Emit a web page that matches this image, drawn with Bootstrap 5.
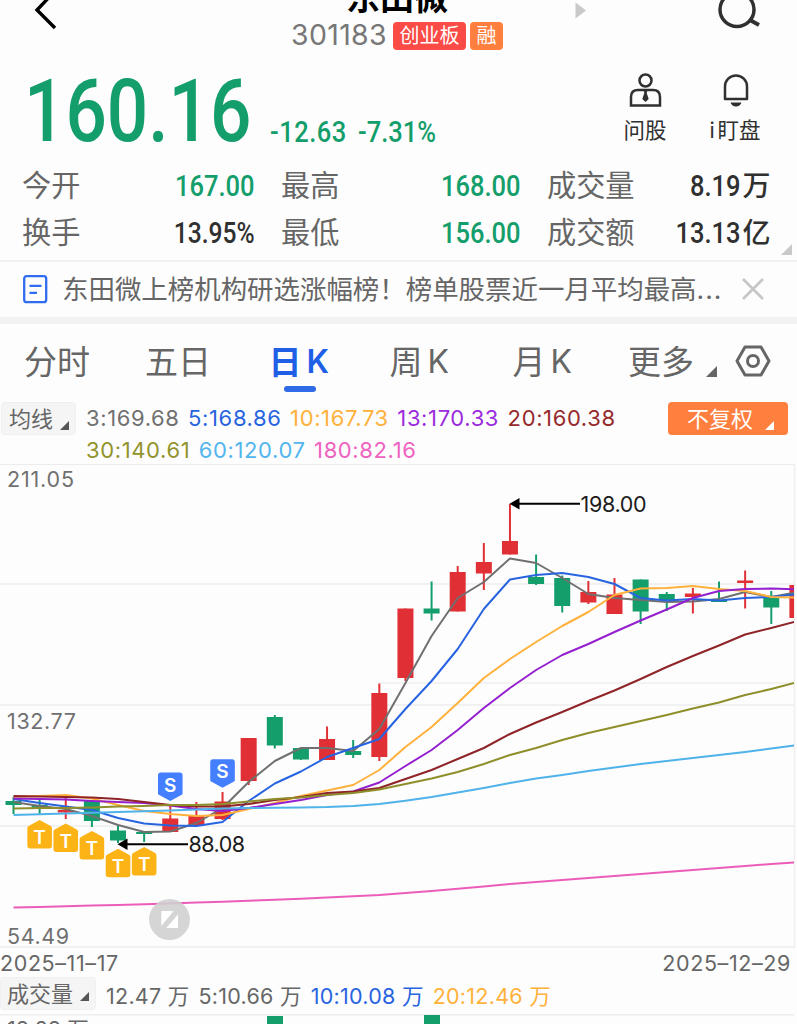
<!DOCTYPE html>
<html lang="zh-CN">
<head>
<meta charset="utf-8">
<meta name="viewport" content="width=device-width, initial-scale=1">
<title>东田微 301183</title>
<link rel="stylesheet" href="https://cdn.jsdelivr.net/npm/bootstrap@5.3.0/dist/css/bootstrap.min.css">
<style>
:root{--up:#e03035;--down:#149e6b;--ink:#303030;--soft:#666}
body{width:797px;height:1024px;overflow:hidden;background:#fdfdfd;color:var(--soft);font-family:Inter,"Noto Sans CJK SC",sans-serif;line-height:1}
svg{display:block;flex:none}
.nowrap{white-space:nowrap}
.topbar{height:60px;overflow:hidden;display:grid;grid-template-columns:260px 274px 263px}
.stock-name{font-size:34px;line-height:34px;font-weight:700;color:#000;margin-top:-19px}
.code-row{height:30px;margin-top:5.500px;gap:4px}
.code{font-size:28.500px;color:#777;font-weight:400;letter-spacing:.3px;margin-right:2px}
.tagx{height:28px;border-radius:4px;color:#fff;font-size:20px;line-height:28px}
.tag-red{background:#fa4b46;width:73px}
.tag-org{background:#ff7f3f;width:33px}
.din{display:inline-block;font-family:Roboto,sans-serif;font-weight:500;font-size:30px;line-height:32px;transform:scaleX(.85);transform-origin:right center}
.din-left{transform-origin:left center}
.din-pct{transform:scaleX(.82)}
.g{color:var(--down)} .k{color:var(--ink)}
.quote{height:102px}
.price{font-size:88px;line-height:88px;width:250px;margin-left:24px;transform:scaleX(.828)}
.quote-actions{font-size:21.500px;color:var(--ink)}
.quote-actions>div{width:90px}
.stats{display:grid;grid-template-columns:233px 240px 223.500px;column-gap:26px;grid-auto-rows:47px;padding:1px 0 0 22px;height:100px;border-bottom:2px solid #f0f0f0}
.stats>div{font-size:29.2px;height:46px}
.unit{font-size:28px;font-weight:500;color:var(--ink);margin-left:2px}
.notice{height:55px;font-size:26.45px;padding-left:22px}
.dots{letter-spacing:1px}
.band{height:7px;background:#f2f2f2}
.tabs-k{height:78px;display:grid;grid-template-columns:121px 125px 121px 123px 114px 109px 60px;padding-left:24px;font-size:33px}
.tabs-k>div{position:relative;height:76px}
.kt{left:-1.500px}
.on{color:#1e5fe6;font-weight:600}
.on::after{content:"";position:absolute;left:15px;top:62px;width:32px;height:6px;border-radius:3px;background:#2f6be6}
.lat{margin-left:5px;font-size:32px}
.legend{height:62px}
.drop{height:33px;border-radius:4px;background:#f5f5f5;border:1px solid #f0f0f0;font-size:22px}
.btn-adj{height:33px;width:120px;border-radius:4px;background:#ff7f3f;color:#fff;font-size:22px;margin-right:9px}
.ma-row{height:32px;font-size:22px;gap:8.5px;letter-spacing:.62px}
.dates{height:29px;font-size:21.5px;padding:3px 6px 0 0;letter-spacing:.6px}
.vol{height:37px;font-size:21.5px;gap:9px}
.vol-vals{height:39px;gap:9px;margin-left:1px;letter-spacing:.26px}
</style>
</head>
<body>
<header class="topbar">
  <svg width="90" height="40" viewBox="0 0 90 40"><path d="M54-8 37 10 55 28" fill="none" stroke="#000" stroke-width="3.4"/></svg>
  <div class="d-flex flex-column align-items-center">
    <div class="stock-name nowrap">东田微</div>
    <div class="code-row d-flex align-items-center nowrap">
      <span class="code">301183</span><span class="tagx tag-red text-center">创业板</span><span class="tagx tag-org text-center">融</span>
    </div>
  </div>
  <svg width="263" height="40" viewBox="0 0 263 40"><path d="M41.500 2.500 52 10.500 41.500 18.500Z" fill="#c9c9c9"/><circle cx="203" cy="9.500" r="17" fill="none" stroke="#303030" stroke-width="3.500"/><path d="m215 19.500 10 5.500" stroke="#303030" stroke-width="4"/></svg>
</header>

<section class="quote d-flex nowrap">
  <div class="din din-left g price" style="margin-top:7px">160.16</div>
  <div class="d-flex g" style="margin-top:56px;margin-left:-4px"><span class="din din-left" style="width:88px;letter-spacing:.6px">-12.63</span><span class="din din-left">-7.31%</span></div>
  <div class="quote-actions d-flex ms-auto" style="margin-right:17px">
    <div class="d-flex flex-column align-items-center">
      <svg class="mt-2" width="36" height="44" viewBox="-.5 0 36 44"><g fill="none" stroke="#303030" stroke-width="2.500"><circle cx="18" cy="12.500" r="6"/><path d="M3.500 37.500V29q0-7 7-7h15q7 0 7 7v8.500Z"/></g><path d="M16 22h4l-.8 3 2 6-3.200 3-3.200-3 2-6Z" fill="#303030"/></svg>
      <span class="mt-2">问股</span>
    </div>
    <div class="d-flex flex-column align-items-center">
      <svg class="mt-2" width="36" height="44" viewBox="-.5 0 36 44"><path d="M7.500 31V18.500a11 11 0 0 1 22 0V31Z" fill="none" stroke="#303030" stroke-width="2.500" stroke-linejoin="round"/><path d="M13 34.500h11q-1.500 4-5.500 4t-5.500-4Z" fill="#303030"/></svg>
      <span class="mt-2"><span style="margin-right:3px">i</span>盯盘</span>
    </div>
  </div>
</section>

<section class="stats position-relative nowrap">
  <div class="d-flex justify-content-between align-items-center"><span>今开</span><span class="din g">167.00</span></div>
  <div class="d-flex justify-content-between align-items-center"><span>最高</span><span class="din g">168.00</span></div>
  <div class="d-flex align-items-center"><span class="me-auto">成交量</span><span class="din k">8.19</span><span class="unit">万</span></div>
  <div class="d-flex justify-content-between align-items-center"><span>换手</span><span class="din din-pct k">13.95%</span></div>
  <div class="d-flex justify-content-between align-items-center"><span>最低</span><span class="din g">156.00</span></div>
  <div class="d-flex align-items-center"><span class="me-auto">成交额</span><span class="din k">13.13</span><span class="unit">亿</span></div>
  <svg class="position-absolute end-0 bottom-0" width="17" height="17" viewBox="0 0 17 17"><path d="M12 1V12H1Z" fill="#c9c9c9"/></svg>
</section>

<section class="notice d-flex align-items-center nowrap">
  <svg width="26" height="30" viewBox="0 0 26 30"><rect x="2.200" y="1.200" width="22" height="26" rx="2.500" fill="none" stroke="#2f6cf0" stroke-width="2.300"/><path d="M7.500 10.800h12M7.500 17.800h7.500" stroke="#2f6cf0" stroke-width="2.300"/></svg>
  <span style="margin-left:14px">东田微上榜机构研选涨幅榜！榜单股票近一月平均最高<span class="dots">...</span></span>
  <svg class="ms-auto" width="24" height="24" viewBox="0 1 24 24" style="margin-right:32px"><path d="m2 2 20 20M22 2 2 22" stroke="#c6c6c6" stroke-width="2.600"/></svg>
</section>
<div class="band"></div>

<nav class="tabs-k nowrap">
  <div class="d-flex align-items-center">分时</div>
  <div class="d-flex align-items-center">五日</div>
  <div class="d-flex align-items-center on kt">日<span class="lat">K</span></div>
  <div class="d-flex align-items-center kt">周<span class="lat">K</span></div>
  <div class="d-flex align-items-center kt">月<span class="lat">K</span></div>
  <div class="d-flex align-items-center">更多<svg width="12" height="12" viewBox="0 0 12 12" style="margin:20px 0 0 12px"><path d="M11 0V11H0Z" fill="#666"/></svg></div>
  <div class="d-flex align-items-center" style="margin-left:-2px"><svg width="36" height="36" viewBox="0 1 36 36"><g fill="none" stroke="#666" stroke-width="3"><path d="M10 4H26L34 18 26 32H10L2 18Z" stroke-linejoin="round"/><circle cx="18" cy="18" r="5.500"/></g></svg></div>
</nav>

<section class="legend d-flex nowrap">
  <div class="drop d-flex align-items-center" style="width:75px;margin-left:1px;padding-left:7px">均线<svg width="11" height="11" viewBox="0 0 11 11" style="margin:13px 0 0 6px"><path d="M10 1V10H1Z" fill="#555"/></svg></div>
  <div style="margin-left:10px">
    <div class="ma-row d-flex align-items-center"><span style="color:#707070">3:169.68</span><span style="color:#2864e0">5:168.86</span><span style="color:#ffb13b">10:167.73</span><span style="color:#9b2bdc">13:170.33</span><span style="color:#962a2c">20:160.38</span></div>
    <div class="ma-row d-flex align-items-center"><span style="color:#92932b">30:140.61</span><span style="color:#53b5ed">60:120.07</span><span style="color:#ee63bf">180:82.16</span></div>
  </div>
  <div class="btn-adj ms-auto d-flex align-items-center" style="padding-left:19px">不复权<svg width="11" height="11" viewBox="0 0 11 11" style="margin:14px 0 0 11px"><path d="M10 1V10H1Z" fill="#fff"/></svg></div>
</section>

<svg id="kline" width="797" height="484" viewBox="0 464 797 484" font-family="Inter,sans-serif"></svg>

<div class="dates d-flex justify-content-between align-items-center nowrap"><span>2025–11–17</span><span>2025–12–29</span></div>
<div class="vol d-flex nowrap">
  <div class="drop d-flex align-items-center" style="width:96px;padding-left:6px">成交量<svg width="11" height="11" viewBox="0 0 11 11" style="margin:5px 0 0 6px"><path d="M10 1V10H1Z" fill="#555"/></svg></div>
  <div class="vol-vals d-flex align-items-center"><span>12.47 万</span><span>5:10.66 万</span><span style="color:#2864e0">10:10.08 万</span><span style="color:#ffb13b">20:12.46 万</span></div>
</div>
<svg width="797" height="11" viewBox="0 1013 797 11" font-family="Inter,'Noto Sans CJK SC',sans-serif"><path d="M0 1013.700H794" stroke="#eee" stroke-width="1.500"/><path d="M267 1015h16v9h-16ZM424 1014h16v10h-16Z" fill="#149e6b"/><text x="7" y="1036" font-size="21.500" fill="#666">18.28 万</text></svg>

<script>
const STEP = 26.13, X0 = 13.5, cx = i => X0 + STEP * i;
// body top, body bottom, wick top, wick bottom, direction (1 = up)
const candles = [
 [801,805,797,814,0],[805,809,800,815,0],[810,812.5,797,819,1],[801,821,801,827,0],[830.5,840.5,826,843,0],
 [832,834,832,842,0],[818.5,832,805,832,1],[815.5,825,802,826,1],[801.5,819,792,820,1],[738,781,738,785,1],
 [717,745.5,715,748.5,0],[748,759.5,748,760,0],[739,760,726.500,760,1],[751,755,740,758,0],[693,757,683.5,761,1],
 [608.5,678,608.5,681,1],[608.5,613.5,581.5,620.5,0],[572,611.5,566,611.5,1],[562,573.5,543,590,1],[541,554.5,504,554.5,1],
 [577,584,554.5,585,0],[578,606,575.5,612.5,0],[592,602.5,581,604,1],[594.5,614,578,614,1],[579.5,611.5,579.5,624,0],
 [594,600,592,611,0],[593.5,597,588,613.5,1],[600,602,581.5,602,0],[580.5,583,570.5,608.5,1],[597,607.5,591,624,0],[585,618,585,618,1]];
const lines = [
 ['#707070',[802,806,809,816,825,832,831.5,823,808,782,761,748,748,751,729,683,636,598,582,558.5,563,578,594,598,600,602,601.5,599,592,597,592]],
 ['#2864e0',[799,803,806.5,810,818,823.5,825.5,826,822,801,783.5,771.5,757,748,739,709,681,649,609,579.5,575,573,577,584,598,600.5,599,600.5,598,597,594]],
 ['#ffb13b',[797,796,795,798.5,805,811,814,816,815,809,803,796,790.5,785,770,747,727,703,678,659,642,626,612,595,588.5,588,586,589,591,597,597.5]],
 ['#9420cf',[798.5,799,799.5,801,802,803,805.5,809,811,808,804,800,795,791.5,782.5,766,750,730,708,688,670,655,644,632,620.5,609.5,598,591,589,588.5,589.5]],
 ['#8f2428',[796,796.5,797,797.5,799,802,805,806.5,806.5,804,800,797,793,791.5,788,779,770,759,748,734,722.5,712,701,690.5,679,667,656,645.5,634.5,628,621]],
 ['#8e8f2b',[808.5,808,808,807.5,806.5,806,805,805,804,801.5,799,797.5,795,793,789.5,784,778.5,772,764,755,748,740,733,727,721,715,708.5,702.5,695,689,682]],
 ['#4fb3ea',[815,814.2,813.5,812.7,812,811.2,810.5,809.5,808.5,808,807.7,807.4,807,806,804,800.7,797,792.5,788,783,778.5,775,771,767.5,764,761,758,755,752,748.5,745]],
 ['#ec5dba',[907.5,906.9,906.2,905.6,905,904.3,903.5,902.6,901.7,900.8,899.8,898.7,897.5,896.3,895,893,891,888.7,886.4,884,882,880,878,876,874,872,870,868,866,864,862.3]]];
let s = '';
for (const y of [464.2,584,705,826,947]) s += `<path d="M0 ${y}H794" stroke="#ececec" stroke-width="1.6"/>`;
s += '<path d="M379 683H794M794.500 464V948" stroke="#efefef" stroke-width="1.4"/>';
s += '<defs><clipPath id="plot"><rect x="0" y="464" width="794" height="484"/></clipPath></defs><g clip-path="url(#plot)">';
candles.forEach(([t,b,h,l,u],i) => { const c = u ? '#e03035' : '#149e6b', x = cx(i);
  s += `<path d="M${x} ${h}V${l}" stroke="${c}" stroke-width="2"/><rect x="${x-8}" y="${t}" width="16" height="${b-t}" fill="${c}"/>`; });
for (const [c,v] of lines) s += `<polyline points="${v.map((y,i)=>cx(i)+','+y).join(' ')}" fill="none" stroke="${c}" stroke-width="2" stroke-linejoin="round"/>`;
s += '</g>';
const badge = (x,y,c,ch,down) => `<g transform="translate(${x} ${y})"><path d="${down ? 'M-9.500 0H9.500Q12.300 0 12.300 3V21Q12.300 22 11 22.500L0 28.500-11 22.500Q-12.300 22-12.300 21V3Q-12.300 0-9.500 0Z' : 'M0 0 11 6Q12.300 7 12.300 8V25.500Q12.300 28.500 9.500 28.500H-9.500Q-12.300 28.500-12.300 25.500V8Q-12.300 7-11 6Z'}" fill="${c}"/><text y="${down?19.2:24}" text-anchor="middle" font-size="19" font-weight="600" fill="#fff">${ch}</text></g>`;
[[1,820],[2,823.5],[3,831],[4,848.7],[5,847]].forEach(([i,y]) => s += badge(cx(i),y,'#fcb316','T',false));
[[6,772.5],[8,759.3]].forEach(([i,y]) => s += badge(cx(i),y,'#437fff','S',true));
s += '<path d="M580 503.700H517M188 844.200H126" stroke="#000" stroke-width="2"/><path d="M509.500 503.700 519.500 498V509.500ZM117.500 844.200 127.500 838.500V850Z" fill="#000"/>';
s += '<g font-size="21.500"><g fill="#1c1c1c"><text x="580.500" y="512" textLength="66">198.00</text><text x="188.500" y="852" textLength="56.500">88.08</text></g><g fill="#707070"><text x="7" y="486.500" textLength="67">211.05</text><text x="7" y="728.500" textLength="69">132.77</text><text x="7" y="944" textLength="62">54.49</text></g></g>';
s += '<circle cx="169.500" cy="919.500" r="20.500" fill="#cfcfcf" fill-opacity=".88"/><path d="M161.300 911H173.500L161.300 926ZM178 914.500V928H166.300Z" fill="#fff"/>';
document.getElementById('kline').innerHTML = s;
</script>
<script src="https://cdn.jsdelivr.net/npm/bootstrap@5.3.0/dist/js/bootstrap.bundle.min.js"></script>
</body>
</html>
